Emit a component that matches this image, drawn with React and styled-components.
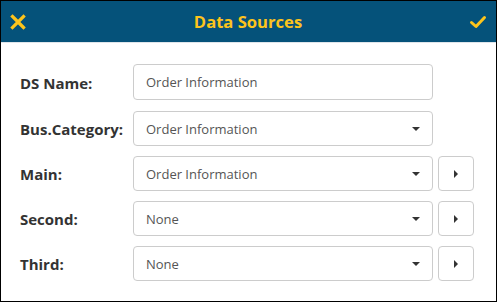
import React from 'react';
import styled, { createGlobalStyle } from 'styled-components';

const Global = createGlobalStyle`
  html, body {
    margin: 0;
    padding: 0;
    background: #fff;
  }
  body {
    font-family: "Open Sans", "Liberation Sans", sans-serif;
  }
`;

const Frame = styled.div`
  width: 497px;
  height: 302px;
  box-sizing: border-box;
  border: 1px solid #000;
  display: flex;
  flex-direction: column;
  background: #fff;
`;

const Header = styled.div`
  height: 41px;
  background: #05527a;
  border-bottom: 1px solid #dfe5ea;
  display: flex;
  align-items: center;
  justify-content: space-between;
  padding: 0 9px 0 8px;
`;

const Title = styled.div`
  color: #fdc41c;
  font-size: 16.6px;
  font-weight: 700;
`;

const IconButton = styled.button`
  background: none;
  border: 0;
  padding: 0;
  width: 18px;
  height: 18px;
  display: flex;
  align-items: center;
  justify-content: center;
  cursor: pointer;
`;

const Body = styled.div`
  display: flex;
  flex-direction: column;
  gap: 10px;
  padding: 21px 0 0 19px;
`;

const Row = styled.div`
  display: flex;
  align-items: center;
  height: ${(p) => (p.$first ? 37 : 35)}px;
  margin-bottom: ${(p) => (p.$first ? 0 : 0)}px;
`;

const Label = styled.div`
  width: 113px;
  font-size: 15px;
  font-weight: 700;
  color: #333;
`;

const Field = styled.div`
  width: 300px;
  height: ${(p) => (p.$first ? 36 : 35)}px;
  align-self: flex-start;
  box-sizing: border-box;
  border: 1px solid #ccc;
  border-radius: 4px;
  display: flex;
  align-items: center;
  justify-content: space-between;
  padding: 0 12px 0 12px;
  font-size: 13px;
  color: #555;
`;

const Caret = styled.span`
  width: 0;
  height: 0;
  border-left: 4px solid transparent;
  border-right: 4px solid transparent;
  border-top: 4px solid #333;
`;

const SideButton = styled.div`
  width: 36px;
  height: 35px;
  box-sizing: border-box;
  margin-left: 5px;
  border: 1px solid #ccc;
  border-radius: 4px;
  display: flex;
  align-items: center;
  justify-content: center;
`;

const Play = styled.span`
  width: 0;
  height: 0;
  border-top: 4px solid transparent;
  border-bottom: 4px solid transparent;
  border-left: 4px solid #333;
`;

const rows = [
  { label: 'DS Name:', value: 'Order Information', select: false, side: false },
  { label: 'Bus.Category:', value: 'Order Information', select: true, side: false },
  { label: 'Main:', value: 'Order Information', select: true, side: true },
  { label: 'Second:', value: 'None', select: true, side: true },
  { label: 'Third:', value: 'None', select: true, side: true }
];

export default () => (
  <>
    <Global />
    <Frame>
      <Header>
        <IconButton aria-label="Close">
          <svg width="16" height="16" viewBox="0 0 16 16">
            <path d="M2.5 2.5 L13.5 13.5 M13.5 2.5 L2.5 13.5" stroke="#fdc41c" strokeWidth="3.2" strokeLinecap="square" />
          </svg>
        </IconButton>
        <Title>Data Sources</Title>
        <IconButton aria-label="Save">
          <svg width="18" height="18" viewBox="0 0 18 18">
            <path d="M2.5 9.5 L7 13.5 L15.5 4.5" stroke="#fdc41c" strokeWidth="3" fill="none" strokeLinecap="round" strokeLinejoin="round" />
          </svg>
        </IconButton>
      </Header>
      <Body>
        {rows.map((row, i) => (
          <Row key={row.label} $first={i === 0}>
            <Label>{row.label}</Label>
            <Field $first={i === 0}>
              <span>{row.value}</span>
              {row.select && <Caret />}
            </Field>
            {row.side &&
              <SideButton>
                <Play />
              </SideButton>
            }
          </Row>
        ))}
      </Body>
    </Frame>
  </>
);
